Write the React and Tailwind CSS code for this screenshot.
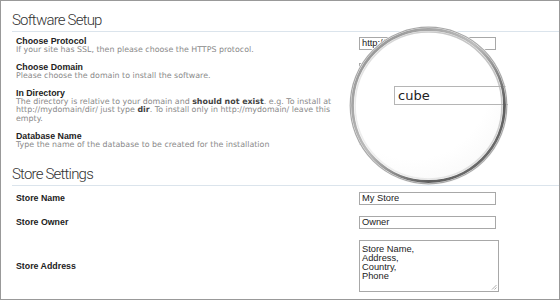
import React from "react";

const label = "font-['Liberation_Sans',Arial,sans-serif] font-bold text-[8.8px] leading-[10px] text-[#222]";
const desc = "font-['DejaVu_Sans',sans-serif] text-[7.9px] leading-[8.4px] text-[#8a8a8a] whitespace-nowrap";
const heading = "font-['Roboto',sans-serif] font-light text-[15px] leading-[20px] tracking-[-0.8px] text-[#333] border-b border-[#dbe4ec] pb-[1px]";
const inputCls = "w-[137px] h-[13px] border border-[#a8a8a8] bg-white font-['Liberation_Sans',Arial,sans-serif] text-[9.3px] leading-[11px] text-[#222] pl-[2px] overflow-hidden whitespace-nowrap";

function Row({ title, children, input }) {
  return (
    <div className="flex">
      <div className="w-[347px] pl-[4px]">
        <div className={label}>{title}</div>
        <div className={desc}>{children}</div>
      </div>
      <div className="pt-[1px]">{input}</div>
    </div>
  );
}

function Magnifier() {
  return (
    <div className="absolute left-[348px] top-[25px] w-[159px] h-[159px]">
      <div className="absolute inset-0 rounded-full overflow-hidden bg-[radial-gradient(circle_at_40%_35%,#ffffff_55%,#f3f3f3_100%)]">
        <div className="absolute left-[45px] top-[60px] w-[130px] h-[19px] border border-[#b5b5b5] bg-white font-['DejaVu_Sans',sans-serif] text-[13px] leading-[17px] text-[#222] pl-[3px]">
          cube
        </div>
      </div>
      <svg className="absolute inset-0" width="159" height="159" viewBox="0 0 159 159">
        <defs>
          <linearGradient id="ringg" x1="0" y1="0" x2="1" y2="1">
            <stop offset="0" stopColor="#8a8a8a" />
            <stop offset="0.45" stopColor="#bdbdbd" />
            <stop offset="0.75" stopColor="#5e5e5e" />
            <stop offset="1" stopColor="#7a7a7a" />
          </linearGradient>
          <linearGradient id="ringl" x1="0" y1="1" x2="1" y2="0">
            <stop offset="0" stopColor="#f2f2f2" />
            <stop offset="0.5" stopColor="#cfcfcf" />
            <stop offset="1" stopColor="#9c9c9c" />
          </linearGradient>
        </defs>
        <circle cx="79.5" cy="79.5" r="78.3" fill="none" stroke="#a8a8a8" strokeWidth="1.2" />
        <circle cx="79.5" cy="79.5" r="76" fill="none" stroke="url(#ringg)" strokeWidth="2.8" />
        <circle cx="79.5" cy="79.5" r="73.4" fill="none" stroke="url(#ringl)" strokeWidth="1.5" opacity="0.7" />
      </svg>
    </div>
  );
}

export default function App() {
  return (
    <div className="relative w-[560px] h-[300px] bg-white border border-[#999] overflow-hidden">
      <div className="pl-[11px] pt-[9px]">
        <div className={heading}>Software Setup</div>
        <div className="flex flex-col gap-[7.5px] pt-[4px]">
          <Row title="Choose Protocol" input={<div className={inputCls}>http://</div>}>
            If your site has SSL, then please choose the HTTPS protocol.
          </Row>
          <Row title="Choose Domain" input={<div className={inputCls}>mydomain</div>}>
            Please choose the domain to install the software.
          </Row>
          <Row title="In Directory" input={<div className={inputCls}>cube</div>}>
            The directory is relative to your domain and <b className="text-[#444]">should not exist</b>. e.g. To install at
            <br />
            http://mydomain/dir/ just type <b className="text-[#444]">dir</b>. To install only in http://mydomain/ leave this
            <br />
            empty.
          </Row>
          <Row title="Database Name" input={<div className={inputCls}>cube</div>}>
            Type the name of the database to be created for the installation
          </Row>
        </div>
        <div className={heading + " mt-[15px]"}>Store Settings</div>
        <div className="flex flex-col gap-[11px] pt-[6px]">
          <div className="flex items-center">
            <div className={label + " w-[347px] pl-[4px]"}>Store Name</div>
            <div className={inputCls}>My Store</div>
          </div>
          <div className="flex items-center">
            <div className={label + " w-[347px] pl-[4px]"}>Store Owner</div>
            <div className={inputCls}>Owner</div>
          </div>
          <div className="flex items-center">
            <div className={label + " w-[347px] pl-[4px]"}>Store Address</div>
            <div className="relative w-[140px] h-[52px] border border-[#a8a8a8] bg-white font-['Liberation_Sans',Arial,sans-serif] text-[9.3px] leading-[8.9px] text-[#222] pl-[2px] pt-[4px]">
              Store Name,<br />Address,<br />Country,<br />Phone
              <svg className="absolute right-[1px] bottom-[1px]" width="6" height="6" viewBox="0 0 6 6">
                <path d="M5.5 1 L1 5.5 M5.5 3.5 L3.5 5.5" stroke="#999" strokeWidth="0.8" />
              </svg>
            </div>
          </div>
        </div>
      </div>
      <Magnifier />
    </div>
  );
}
